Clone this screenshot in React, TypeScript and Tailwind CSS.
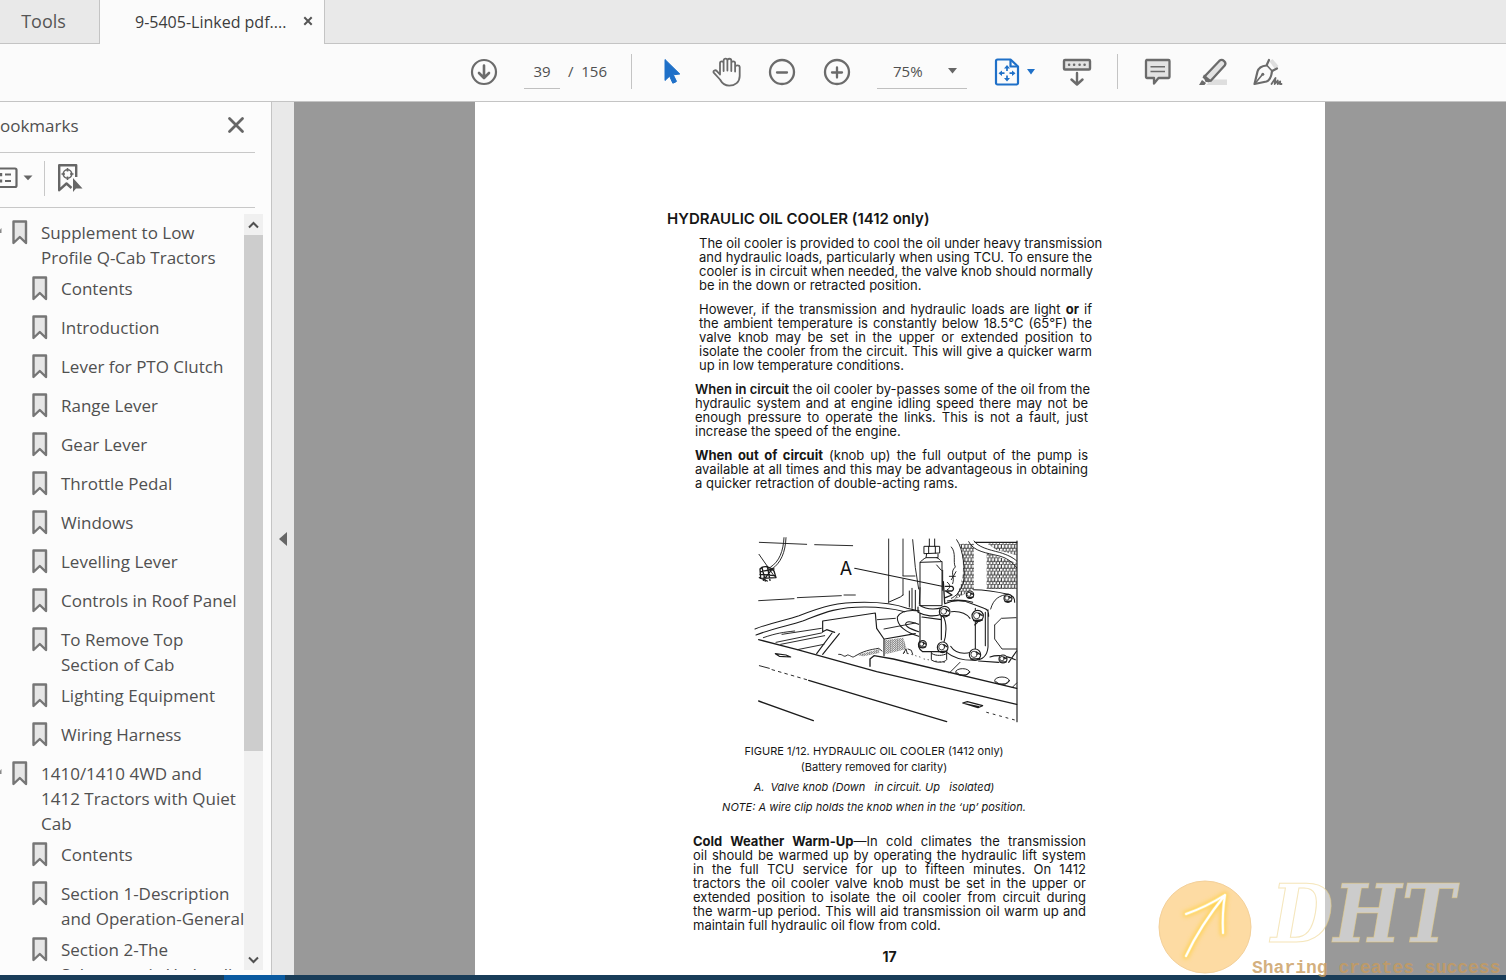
import type { ReactNode } from "react";

type Bookmark = { lines: string[]; level: 0 | 1 };

const bookmarks: Bookmark[] = [
  { lines: ["Supplement to Low", "Profile Q-Cab Tractors"], level: 0 },
  { lines: ["Contents"], level: 1 },
  { lines: ["Introduction"], level: 1 },
  { lines: ["Lever for PTO Clutch"], level: 1 },
  { lines: ["Range Lever"], level: 1 },
  { lines: ["Gear Lever"], level: 1 },
  { lines: ["Throttle Pedal"], level: 1 },
  { lines: ["Windows"], level: 1 },
  { lines: ["Levelling Lever"], level: 1 },
  { lines: ["Controls in Roof Panel"], level: 1 },
  { lines: ["To Remove Top", "Section of Cab"], level: 1 },
  { lines: ["Lighting Equipment"], level: 1 },
  { lines: ["Wiring Harness"], level: 1 },
  { lines: ["1410/1410 4WD and", "1412 Tractors with Quiet", "Cab"], level: 0 },
  { lines: ["Contents"], level: 1 },
  { lines: ["Section 1-Description", "and Operation-General"], level: 1 },
  { lines: ["Section 2-The", "Selectamatic Hydraulic"], level: 1 },
];

function BookmarkIcon() {
  return (
    <svg width="16" height="25" viewBox="0 0 16 25" className="shrink-0" aria-hidden="true">
      <path d="M1.500 1.500h12.500v21.500l-6.200-6-6.300 6z" fill="#e6e6e6" stroke="#767676" strokeWidth="2.400" strokeLinejoin="round" />
    </svg>
  );
}

function BookmarkRow({ item }: { item: Bookmark }) {
  return (
    <li className={item.level === 0 ? "min-h-[39px] py-[3px]" : "min-h-[39px] py-[3px] pl-8"}>
      <a href="#bookmark" className="flex items-start text-[17px] leading-[25px] whitespace-nowrap text-[#505050]">
        {item.level === 0 && (
          <svg width="12" height="25" viewBox="0 0 12 25" className="shrink-0" aria-hidden="true">
            <path d="M1.500 8v5l-5 0z" fill="#888" />
          </svg>
        )}
        <BookmarkIcon />
        <span className="ml-[13px] flex flex-col">
          {item.lines.map((l) => (
            <span key={l}>{l}</span>
          ))}
        </span>
      </a>
    </li>
  );
}

function Sidebar() {
  return (
    <aside className="flex w-[272px] shrink-0 flex-col overflow-hidden border-r border-[#c4c4c4] bg-[#fcfcfc]">
      <div className="mr-4 flex h-[51px] shrink-0 items-center justify-between border-b border-[#c8c8c8] pr-[7px] pb-0.5">
        <h2 className="-ml-[11px] text-[17px] text-[#505050]">Bookmarks</h2>
        <button type="button" aria-label="Close bookmarks" className="flex size-6 items-center justify-center pb-0.5">
          <svg width="18" height="18" viewBox="0 0 18 18">
            <path d="M2.500 2.500l13 13M15.500 2.500l-13 13" stroke="#666" strokeWidth="2.800" strokeLinecap="round" />
          </svg>
        </button>
      </div>
      <div className="mr-4 flex h-[55px] shrink-0 items-center border-b border-[#c8c8c8] pb-1">
        <button type="button" aria-label="Options" className="flex w-11 items-center">
          <svg width="34" height="24" viewBox="0 0 34 24">
            <path d="M-6 2.500H15a1.500 1.500 0 0 1 1.500 1.500v15.500a1.500 1.500 0 0 1-1.500 1.500H-6" fill="none" stroke="#666" strokeWidth="2.200" />
            <path d="M5 8.500h6M5 15h6" stroke="#666" strokeWidth="2" />
            <path d="M-1 7h3.200v3.200H-1zM-1 13.400h3.200v3.200H-1z" fill="#666" />
            <path d="M23.500 9.500h9l-4.500 4.800z" fill="#666" />
          </svg>
        </button>
        <span className="h-[35px] w-px bg-[#c8c8c8]" />
        <button type="button" aria-label="Find current bookmark" className="ml-3">
          <svg width="28" height="30" viewBox="0 0 28 30">
            <path d="M19.200 14V2.200H2.200v25l7.300-6.700 5 4.500" fill="none" stroke="#666" strokeWidth="2.400" strokeLinejoin="round" />
            <circle cx="10.500" cy="11" r="4.200" fill="none" stroke="#666" strokeWidth="1.600" />
            <path d="M10.500 5v3.500M10.500 13.500V17M4.500 11H8M13 11h3.500" stroke="#666" strokeWidth="1.600" />
            <path d="M16 15v14l3-3.600h6.500z" fill="#666" />
          </svg>
        </button>
      </div>
      <div className="mt-1.5 mb-[5px] flex min-h-0 flex-1">
        <ul className="min-w-0 flex-1 overflow-hidden pt-[3px]">
          {bookmarks.map((b, i) => (
            <BookmarkRow key={i} item={b} />
          ))}
        </ul>
        <div className="mr-2 flex w-[19px] shrink-0 flex-col bg-[#f0f0f0]">
          <button type="button" aria-label="Scroll up" className="flex h-[21px] items-center justify-center">
            <svg width="11" height="8" viewBox="0 0 11 8">
              <path d="M1 6.500l4.500-4.500L10 6.500" fill="none" stroke="#505050" strokeWidth="2" />
            </svg>
          </button>
          <div className="flex-[516] bg-[#cdcdcd]" />
          <div className="flex-[198]" />
          <button type="button" aria-label="Scroll down" className="flex h-[21px] items-center justify-center">
            <svg width="11" height="8" viewBox="0 0 11 8">
              <path d="M1 1.500l4.500 4.500L10 1.500" fill="none" stroke="#505050" strokeWidth="2" />
            </svg>
          </button>
        </div>
      </div>
    </aside>
  );
}

function ToolButton({ label, children }: { label: string; children: ReactNode }) {
  return (
    <button type="button" aria-label={label} className="flex h-10 w-[55px] shrink-0 items-center justify-center">
      {children}
    </button>
  );
}

function Toolbar() {
  return (
    <div className="flex h-[58px] shrink-0 items-center border-b border-[#c4c4c4] bg-[#fbfbfb] pb-0.5 pl-[456px] text-[15px] text-[#505050]">
      <ToolButton label="Download">
        <svg width="28" height="28" viewBox="0 0 28 28" fill="none" stroke="#6b6b6b" strokeWidth="2.200" strokeLinecap="round" strokeLinejoin="round">
          <circle cx="14" cy="14" r="12" />
          <path d="M14 7.500v12M9 15l5 5 5-5" strokeWidth="2.600" />
        </svg>
      </ToolButton>
      <input aria-label="Page number" defaultValue="39" className="ml-[13px] h-[34px] w-9 border-b border-[#c0c0c0] bg-transparent text-center outline-none" />
      <span className="ml-2 w-[55px] whitespace-pre">/  156</span>
      <span className="ml-2 h-[35px] w-px bg-[#c4c4c4]" />
      <div className="ml-3 flex">
        <ToolButton label="Select">
          <svg width="20" height="28" viewBox="0 0 20 28">
            <path d="M3 1.500v21l4.600-4.300 3.200 7 2.900-1.200.8-.6-3.200-6.600 6.500-.8z" fill="#1f70c8" stroke="#1f70c8" strokeLinejoin="round" />
          </svg>
        </ToolButton>
        <ToolButton label="Hand">
          <svg width="30" height="30" viewBox="0 0 30 30" fill="none" stroke="#6b6b6b" strokeWidth="1.800" strokeLinecap="round" strokeLinejoin="round">
            <path d="M8 17.500V6.200c0-2.500 3.600-2.500 3.600 0V14V3.700c0-2.700 3.800-2.700 3.800 0V13.500V3.700c0-2.600 3.900-2.600 3.900 0V14V6c0-2.300 3.800-2.300 3.800 0v8.500V10c.2-2.200 4.400-2.200 4.600 0v9c0 6-4.500 9.700-10.500 9.700-5 0-7.300-2.700-9.200-6.200L1.700 15.700c-.9-2 1.700-3.300 3.200-1.600L8 17.500" />
          </svg>
        </ToolButton>
        <ToolButton label="Zoom out">
          <svg width="28" height="28" viewBox="0 0 28 28" fill="none" stroke="#6b6b6b" strokeWidth="2.300" strokeLinecap="round">
            <circle cx="14" cy="14" r="12" />
            <path d="M9 14.500h10" />
          </svg>
        </ToolButton>
        <ToolButton label="Zoom in">
          <svg width="28" height="28" viewBox="0 0 28 28" fill="none" stroke="#6b6b6b" strokeWidth="2.300" strokeLinecap="round">
            <circle cx="14" cy="14" r="12" />
            <path d="M9 14.500h10M14 9.500v10" />
          </svg>
        </ToolButton>
      </div>
      <label className="ml-[13px] flex h-[34px] w-[90px] items-center border-b border-[#c0c0c0] pr-2.5">
        <select aria-label="Zoom level" defaultValue="75%" className="min-w-0 flex-1 appearance-none bg-transparent pl-4 outline-none">
          <option>75%</option>
          <option>100%</option>
        </select>
        <svg width="9" height="6" viewBox="0 0 9 6" aria-hidden="true">
          <path d="M0 0h9L4.500 5.500z" fill="#666" />
        </svg>
      </label>
      <button type="button" aria-label="Page fit" className="ml-[27px] flex h-10 items-center gap-[7px]">
        <svg width="26" height="28" viewBox="0 0 26 28" fill="none" stroke="#1f70c8" strokeWidth="2.200" strokeLinejoin="round">
          <path d="M16.500 1.500H3.500a1.500 1.500 0 0 0-1.500 1.500v22a1.500 1.500 0 0 0 1.500 1.500h19A1.500 1.500 0 0 0 24 25V8.500z" />
          <path d="M16.500 2v6.500H23.500" />
          <path d="M13 9v4M13 17.500v4M6 15.200h4.500M15.500 15.200H20" strokeWidth="1.700" />
          <path d="M13 7l3 3.500h-6zM13 23.500l3-3.500h-6zM4.500 15.200L8 12.400V18zM21.500 15.200L18 12.400V18z" fill="#1f70c8" stroke="none" />
        </svg>
        <svg width="8" height="6" viewBox="0 0 8 6">
          <path d="M0 0h8L4 5.500z" fill="#1f70c8" />
        </svg>
      </button>
      <div className="ml-[14px] flex">
        <ToolButton label="Scrolling mode">
          <svg width="30" height="28" viewBox="0 0 30 28" fill="none" stroke="#6b6b6b" strokeWidth="2.400" strokeLinecap="round" strokeLinejoin="round">
            <rect x="2" y="2" width="26" height="9.500" rx="1" fill="#e3e3e3" />
            <path d="M7 6.800h.2M12 6.800h.2M17.500 6.800h.2M22.500 6.800h.2" />
            <path d="M15 15v11M9.500 21.500l5.500 5 5.500-5" />
          </svg>
        </ToolButton>
      </div>
      <span className="ml-[13px] h-[35px] w-px bg-[#c4c4c4]" />
      <div className="ml-3 flex">
        <ToolButton label="Comment">
          <svg width="28" height="28" viewBox="0 0 28 28" stroke="#6b6b6b" strokeWidth="2.300" strokeLinejoin="round">
            <path d="M2.500 2h22a1 1 0 0 1 1 1v16a1 1 0 0 1-1 1H14.500L10 25.500V20H3a1 1 0 0 1-1-1V3z" fill="#e3e3e3" />
            <path d="M6.500 8.800h14.500M6.500 13.500h14.500" strokeWidth="1.500" />
          </svg>
        </ToolButton>
        <ToolButton label="Highlight">
          <svg width="30" height="28" viewBox="0 0 30 28" strokeLinejoin="round">
            <path d="M15 21.500h14V27H8z" fill="#dedede" />
            <path d="M7 18L21.500 2.700c3-2.300 7.500 1.600 5.200 4.800L13 22.500l-4.800.3z" fill="#e3e3e3" stroke="#6b6b6b" strokeWidth="2.300" />
            <path d="M6 16.500l8 6.500-4 1.500-5.500-5zM4 22l4 3-1.500 2H1z" fill="#6b6b6b" />
          </svg>
        </ToolButton>
        <ToolButton label="Sign">
          <svg width="30" height="28" viewBox="0 0 30 28" fill="none" stroke="#6b6b6b" strokeWidth="2.200" strokeLinecap="round" strokeLinejoin="round">
            <path d="M16.500 3.500l3-2.500 6 7-3.500 3z" fill="#dedede" stroke="none" />
            <path d="M16 2l-2.500 5.500c-5 .5-8 2.500-9 6L1.500 26l12-2.500c4-1.500 5-5.500 5.500-10.500l5-2.500" />
            <path d="M14 7.500l5.500 6M2 25.500l7-8.500" strokeWidth="1.600" />
            <circle cx="9.800" cy="16.300" r="1.500" fill="#6b6b6b" stroke="none" />
            <path d="M18.500 26l4-6-.8 6 3-3.500v3.500l2.500-2.500-.2 2.500h1.500" strokeWidth="1.800" />
          </svg>
        </ToolButton>
      </div>
    </div>
  );
}

function TabBar() {
  return (
    <div className="flex h-11 shrink-0 bg-[#fbfbfb]">
      <button type="button" className="w-[100px] border-r border-b border-[#c4c4c4] bg-[#e9e9e9] pr-3 text-[18px] text-[#555]">
        Tools
      </button>
      <div className="flex w-[224px] items-center pl-[35px]">
        <span className="w-[155px] text-[16px] whitespace-nowrap text-[#3d3d3d]">9-5405-Linked pdf....</span>
        <button type="button" aria-label="Close tab" className="ml-3 flex h-6 w-3 items-center justify-center pb-0.5">
          <svg width="10" height="10" viewBox="0 0 10 10">
            <path d="M1.300 1.300l7.400 7.400M8.700 1.300L1.300 8.700" stroke="#555" strokeWidth="2" />
          </svg>
        </button>
      </div>
      <div className="flex-1 border-b border-l border-[#c4c4c4] bg-[#e9e9e9]" />
    </div>
  );
}

function Lines({ className, lines }: { className: string; lines: ReactNode[] }) {
  return (
    <p className={className}>
      {lines.map((line, i) => (
        <span
          key={i}
          className={i < lines.length - 1 ? "block whitespace-nowrap [text-align-last:justify]" : "block whitespace-nowrap"}
        >
          {line}
        </span>
      ))}
    </p>
  );
}

function Bolt({ x, y, r }: { x: number; y: number; r: number }) {
  return (
    <g transform={`translate(${x} ${y})`}>
      <circle r={r} fill="#fff" strokeWidth="3.500" />
      <circle r={r * 0.55} cx="-3" cy="-1" fill="#fff" strokeWidth="2.500" />
      <path d={`M${-r * 0.7} ${r * 0.8}L${r * 0.8} ${r * 0.7}M${r * 0.2} ${-r * 0.5}L${r * 0.8} ${-r * 0.1}`} strokeWidth="4" />
    </g>
  );
}

function CoolerDrawing() {
  return (
    <svg width="268" height="190" viewBox="42 30 804 570" fill="none" stroke="#1c1c1c" strokeWidth="2.800" strokeLinecap="round" strokeLinejoin="round" role="img" aria-label="Hydraulic oil cooler">
      <defs>
        <pattern id="mesh" width="20" height="20" patternUnits="userSpaceOnUse">
          <path d="M4 1v7M14 0v7M9 11v7M19 11v6M0 9h6M11 9h6M2 19h4M13 19h4" stroke="#1c1c1c" strokeWidth="3" />
        </pattern>
        <pattern id="shade" width="7" height="6" patternUnits="userSpaceOnUse">
          <path d="M0 1h3M3 4h3" stroke="#444" strokeWidth="2" />
        </pattern>
      </defs>
      <path d="M660 56h42v135l-60 34c30-50 34-100 18-169zM740 84l90 30v78l-90 0z" fill="url(#mesh)" stroke="none" />
      <path d="M740 55h90v36l-60-16z" fill="url(#mesh)" stroke="none" />
      <path d="M58 52l142 6M224 59l114 3M56 227l106-6M172 218l132-6M312 210h34" />
      <path d="M132 38c-2 40-14 72-40 88M138 38c-2 46-16 76-42 94M57 88l46 66" />
      <path d="M60 132c10-12 30-8 42 6l6 20-46 2zM62 140l40-8M66 128l10 40M82 124l8 42M60 148l44 4M70 166l28-36M58 158l24 10" strokeWidth="4" />
      <path d="M446 42v188M489 42v110M489 162v48M518 44l8 84 10 64M489 153h36" />
      <path d="M445 232l36-16 8-6M508 198v48M516 190v60M526 196v60" strokeWidth="3" />
      <path d="M686 50c14 30 56 34 88 42 26 6 42 18 56 36M702 48c12 18 44 26 76 34 26 8 42 16 52 26" />
      <path d="M706 52h124" strokeWidth="4" />
      <path d="M831 48V590" strokeWidth="3.500" />
      <path d="M650 44c22 30 26 100 20 130-8 24-22 40-36 46M634 66c16 18 4 44 12 60-18 16 0 30-8 50M648 140l-14 24M646 154h-18M622 172c10 6 10 18 0 22" />
      <path d="M568 42v22M584 42v22M553 64h46v20l-46 2zM566 64v20M586 64v20M560 86l-2 12h36v-10M558 98c-8 4-16 10-18 16v128h66V112c-6-8-10-12-16-14M540 112l66-2M590 120l14 16M540 188l-2 48M608 136v60" strokeWidth="3" />
      <path d="M610 170l4 64M616 184h20c6 4 6 10 0 14h-20M620 200l16 10-20 8" strokeWidth="4" />
      <path d="M538 240c20 14 46 14 70 8M534 246v16c22 12 50 14 70 6M540 264v82c-8 14-4 26 8 34h48M546 276l58 8M604 270v74" strokeWidth="3.500" />
      <path d="M45 312c50-20 92-26 132-40 74-28 110-40 196-40 60 0 96 6 128 18l36 8M48 330c56-22 100-28 140-42 62-24 100-42 186-42 46 0 90 6 120 14" strokeWidth="3.200" />
      <path d="M70 338c40-14 60-16 94-20M126 328l118-18M108 352l136-28 6-4M122 358l132-26M172 374l80-16M412 284l54-4M432 312l94-18" />
      <path d="M538 258c-30-4-56 0-66 18-2 28 30 48 64 58M536 298c-20-8-30-10-36-6-10 8 4 18 36 28" strokeWidth="3.200" />
      <path d="M248 288l158-24 4 46M248 288v32l12-6 24 8M410 310l22 32v50M276 324l-46 62M298 326l-50 62M434 342l92-16" strokeWidth="3.500" />
      <path d="M434 346l56-8 10 34-64 16z" fill="url(#shade)" stroke="none" />
      <path d="M490 386l8-14 4 14M504 372l10 4 4 12M296 388c14-2 14 12 26 2 10 0 14 10 22 4 26-16 46-20 72-24l10 8" />
      <path d="M350 390l68-18v12l-48 10z" fill="url(#shade)" stroke="none" />
      <path d="M56 344l116 30 238 66 420 98" strokeWidth="4" />
      <path d="M390 424v-22l12-10 58 10 370 88" strokeWidth="4" />
      <path d="M58 422l30 8" />
      <path d="M96 434l104 30" strokeDasharray="8 12" />
      <path d="M206 466l172 52 242 72M56 528l164 59" strokeWidth="4" />
      <path d="M106 386l32 4 14 6-34-2zM668 534l14-4 46 12-14 6zM680 537l36 8" strokeWidth="3.500" />
      <path d="M740 562l88 24" strokeDasharray="6 14" />
      <path d="M700 194c40 0 72 6 104 14 16 4 20 10 20 24M614 236c28-12 60-10 86 2l32 12c14 4 14 14 14 24M622 228c30-6 50-4 76 4M744 254v112c-2 28-16 40-44 40-26 0-56-4-80-24M706 250v122M736 262v100" strokeWidth="3.200" />
      <path d="M634 260c26-2 44 4 56 20M632 364c14 22 36 24 62 18M704 300c14-10 14-24 6-34M608 272c14 20 12 58 2 86" strokeWidth="3.200" />
      <path d="M752 252c8-30 26-42 54-44M764 300l20-20 44-2M764 300v42l22 30h44" />
      <path d="M750 396c24-8 48-4 76 8M716 408l60 4M806 412l24-34" strokeWidth="3.500" />
      <path d="M574 380v24c10 10 40 10 46 0v-22M576 386c12 8 34 6 44 0" strokeWidth="3" />
      <path d="M628 444l32-32M816 488l14-14" />
      <ellipse cx="668" cy="441" rx="21" ry="10" />
      <path d="M650 442l10 8h18l10-8" />
      <ellipse cx="786" cy="467" rx="22" ry="11" />
      <path d="M768 470l10 7h18l10-8" />
      <path d="M552 402l70 12M540 396l-48-14" strokeWidth="2" strokeDasharray="2 10" />
      <Bolt x={614} y={260} r={16} />
      <Bolt x={713} y={273} r={17} />
      <Bolt x={608} y={367} r={16} />
      <Bolt x={705} y={389} r={17} />
      <Bolt x={690} y={209} r={11} />
      <Bolt x={804} y={220} r={12} />
      <Bolt x={789} y={402} r={12} />
      <Bolt x={548} y={358} r={11} />
      <path d="M344 130l262 54" strokeWidth="3.200" />
      <text x="299" y="150" fill="#111" stroke="none" fontSize="54" fontFamily="Inter, sans-serif">
        A
      </text>
    </svg>
  );
}

function DocumentPage() {
  return (
    <article className="w-[850px] shrink-0 overflow-hidden bg-white pt-[107px] font-[Inter,sans-serif] text-[13px] leading-[14px] text-[#161616]">
      <h1 className="pl-48 text-[15px] leading-5 font-semibold">HYDRAULIC OIL COOLER (1412 only)</h1>
      <div className="mt-[7px] flex flex-col gap-2.5">
        <Lines
          className="ml-[224px] w-[393px]"
          lines={[
            "The oil cooler is provided to cool the oil under heavy transmission",
            "and hydraulic loads, particularly when using TCU. To ensure the",
            "cooler is in circuit when needed, the valve knob should normally",
            "be in the down or retracted position.",
          ]}
        />
        <Lines
          className="ml-[224px] w-[393px]"
          lines={[
            <>However, if the transmission and hydraulic loads are light <b>or</b> if</>,
            "the ambient temperature is constantly below 18.5°C (65°F) the",
            "valve knob may be set in the upper or extended position to",
            "isolate the cooler from the circuit. This will give a quicker warm",
            "up in low temperature conditions.",
          ]}
        />
        <Lines
          className="ml-[220px] w-[393px]"
          lines={[
            <><b className="font-semibold">When in circuit</b> the oil cooler by-passes some of the oil from the</>,
            "hydraulic system and at engine idling speed there may not be",
            "enough pressure to operate the links. This is not a fault, just",
            "increase the speed of the engine.",
          ]}
        />
        <Lines
          className="ml-[220px] w-[393px]"
          lines={[
            <><b>When out of circuit</b> (knob up) the full output of the pump is</>,
            "available at all times and this may be advantageous in obtaining",
            "a quicker retraction of double-acting rams.",
          ]}
        />
      </div>
      <figure className="mt-[45px] ml-[219px] w-[360px] text-center text-[11px] leading-4">
        <div className="flex justify-center pl-7">
          <CoolerDrawing />
        </div>
        <figcaption className="mt-[18px] flex flex-col gap-1">
          <p>
            FIGURE 1/12. HYDRAULIC OIL COOLER (1412 only)
            <br />
            (Battery removed for clarity)
          </p>
          <p className="whitespace-pre italic">A.  Valve knob (Down   in circuit. Up   isolated)</p>
          <p className="italic">NOTE: A wire clip holds the knob when in the ‘up’ position.</p>
        </figcaption>
      </figure>
      <Lines
        className="mt-[19px] ml-[218px] w-[393px]"
        lines={[
          <><b>Cold Weather Warm-Up</b>—In cold climates the transmission</>,
          "oil should be warmed up by operating the hydraulic lift system",
          "in the full TCU service for up to fifteen minutes. On 1412",
          "tractors the oil cooler valve knob must be set in the upper or",
          "extended position to isolate the oil cooler from circuit during",
          "the warm-up period. This will aid transmission oil warm up and",
          "maintain full hydraulic oil flow from cold.",
        ]}
      />
      <p className="mt-[15px] ml-[218px] w-[393px] text-center text-[14px] leading-5 font-bold">17</p>
    </article>
  );
}

function Watermark() {
  return (
    <div className="pointer-events-none absolute right-0 bottom-0 flex h-[102px] items-start">
      <svg width="94" height="94" viewBox="0 0 94 94" className="mt-[2px]" aria-hidden="true">
        <defs>
          <filter id="glow" x="-30%" y="-30%" width="160%" height="160%">
            <feGaussianBlur stdDeviation="2" />
          </filter>
        </defs>
        <circle cx="47" cy="47" r="46" fill="#fddba3" stroke="#f3d09a" />
        <g fill="none" strokeLinecap="round" strokeLinejoin="round">
          <path d="M28 76Q42 46 67 15M28 34q20-7 39-19q-3 18-2 38" stroke="#ffd045" strokeOpacity="0.8" strokeWidth="6" filter="url(#glow)" />
          <path d="M28 76Q42 46 67 15M28 34q20-7 39-19q-3 18-2 38" stroke="#ffe88e" strokeWidth="3.500" />
          <path d="M28 76Q42 46 67 15M28 34q20-7 39-19q-3 18-2 38" stroke="#fff" strokeWidth="2" />
        </g>
      </svg>
      <div className="flex w-[254px] flex-col pt-1">
        <span className="pl-[19px] font-['DejaVu_Serif_Condensed','DejaVu_Serif',serif] text-[80px] leading-[64px] font-bold text-white/50 italic [-webkit-text-stroke:1px_rgba(235,205,120,0.5)]">
          DHT
        </span>
        <span className="mt-3 font-['Liberation_Mono',monospace] text-[18px] leading-5 font-bold whitespace-nowrap text-[#c89b5c]/80">
          Sharing creates success
        </span>
      </div>
    </div>
  );
}

export default function App() {
  return (
    <div className="relative flex h-screen flex-col overflow-hidden bg-[#fbfbfb] font-['Open_Sans',sans-serif]">
      <TabBar />
      <Toolbar />
      <div className="flex min-h-0 flex-1">
        <Sidebar />
        <button type="button" aria-label="Collapse panel" className="flex w-[22px] shrink-0 items-center justify-center bg-[#e9e9e9]">
          <svg width="8" height="14" viewBox="0 0 8 14">
            <path d="M8 0v14L0 7z" fill="#666" />
          </svg>
        </button>
        <main className="flex min-w-0 flex-1 justify-center overflow-hidden bg-[#999]">
          <DocumentPage />
        </main>
      </div>
      <div className="flex h-[5px] shrink-0 bg-[#193d59]">
        <span className="ml-56 w-[61px] bg-[#0a5aa0]" />
      </div>
      <Watermark />
    </div>
  );
}
